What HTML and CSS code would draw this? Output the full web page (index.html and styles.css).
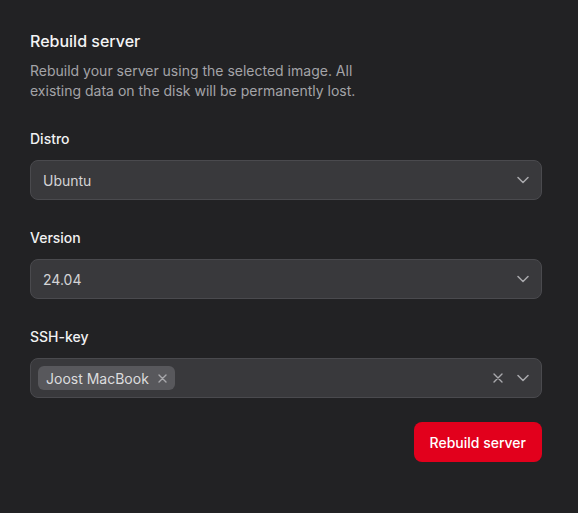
FILE: index.html
```html
<!DOCTYPE html>
<html lang="en">
<head>
<meta charset="utf-8">
<title>Rebuild server</title>
<link rel="stylesheet" href="styles.css">
</head>
<body>
<div class="panel">
  <h2 class="title">Rebuild server</h2>
  <p class="desc">Rebuild your server using the selected image. All existing data on the disk will be permanently lost.</p>

  <div class="field">
    <label class="label">Distro</label>
    <div class="select">
      <span class="value">Ubuntu</span>
      <svg class="chev" width="12" height="8" viewBox="0 0 12 8"><path d="M1 1.5l5 5 5-5" fill="none" stroke="currentColor" stroke-width="1.5" stroke-linecap="round" stroke-linejoin="round"/></svg>
    </div>
  </div>

  <div class="field">
    <label class="label">Version</label>
    <div class="select">
      <span class="value">24.04</span>
      <svg class="chev" width="12" height="8" viewBox="0 0 12 8"><path d="M1 1.5l5 5 5-5" fill="none" stroke="currentColor" stroke-width="1.5" stroke-linecap="round" stroke-linejoin="round"/></svg>
    </div>
  </div>

  <div class="field">
    <label class="label">SSH-key</label>
    <div class="select multi">
      <span class="tag">Joost MacBook
        <svg class="tag-x" width="9" height="9" viewBox="0 0 9 9"><path d="M1 1l7 7M8 1L1 8" stroke="currentColor" stroke-width="1.4" stroke-linecap="round"/></svg>
      </span>
      <span class="spacer"></span>
      <svg class="clear" width="10" height="10" viewBox="0 0 10 10"><path d="M1 1l8 8M9 1L1 9" stroke="currentColor" stroke-width="1.4" stroke-linecap="round"/></svg>
      <svg class="chev" width="12" height="8" viewBox="0 0 12 8"><path d="M1 1.5l5 5 5-5" fill="none" stroke="currentColor" stroke-width="1.5" stroke-linecap="round" stroke-linejoin="round"/></svg>
    </div>
  </div>

  <div class="actions">
    <button class="btn">Rebuild server</button>
  </div>
</div>
</body>
</html>
```
FILE: styles.css
```css
html, body {
  margin: 0;
  padding: 0;
  background: #222224;
  height: 100%;
}
body {
  font-family: Inter, "Noto Sans", sans-serif;
  color: #f2f2f2;
}
.panel {
  padding: 29px 36px 0 30px;
}
.title {
  margin: 0;
  font-size: 16px;
  line-height: 24px;
  font-weight: 500;
  color: #f4f4f5;
}
.desc {
  margin: 8px 0 0;
  max-width: 340px;
  font-size: 14px;
  line-height: 20px;
  color: #a4a4a8;
}
.field {
  margin-top: 28px;
  display: flex;
  flex-direction: column;
}
.label {
  font-size: 14px;
  line-height: 20px;
  font-weight: 500;
  color: #f1f1f2;
  margin-bottom: 11px;
}
.select {
  box-sizing: border-box;
  height: 40px;
  display: flex;
  align-items: center;
  background: #39393c;
  border: 1px solid #4a4a4e;
  border-radius: 8px;
  padding: 0 12px 0 12px;
}
.value {
  flex: 1;
  font-size: 14px;
  color: #d4d4d6;
}
.chev {
  color: #a9a9ad;
  display: block;
}
.multi {
  padding-left: 7px;
}
.tag {
  display: inline-flex;
  align-items: center;
  gap: 9px;
  height: 24px;
  padding: 0 8px 0 8px;
  background: #58585c;
  border-radius: 6px;
  font-size: 14px;
  color: #dcdcde;
}
.tag-x {
  color: #a9a9ad;
  display: block;
}
.spacer {
  flex: 1;
}
.clear {
  color: #a9a9ad;
  display: block;
  margin-right: 14px;
}
.actions {
  display: flex;
  justify-content: flex-end;
  margin-top: 24px;
}
.btn {
  height: 40px;
  padding: 0 16px;
  background: #e2001c;
  color: #ffffff;
  border: none;
  border-radius: 8px;
  font-family: Inter, "Noto Sans", sans-serif;
  font-size: 14px;
  font-weight: 500;
}
```
